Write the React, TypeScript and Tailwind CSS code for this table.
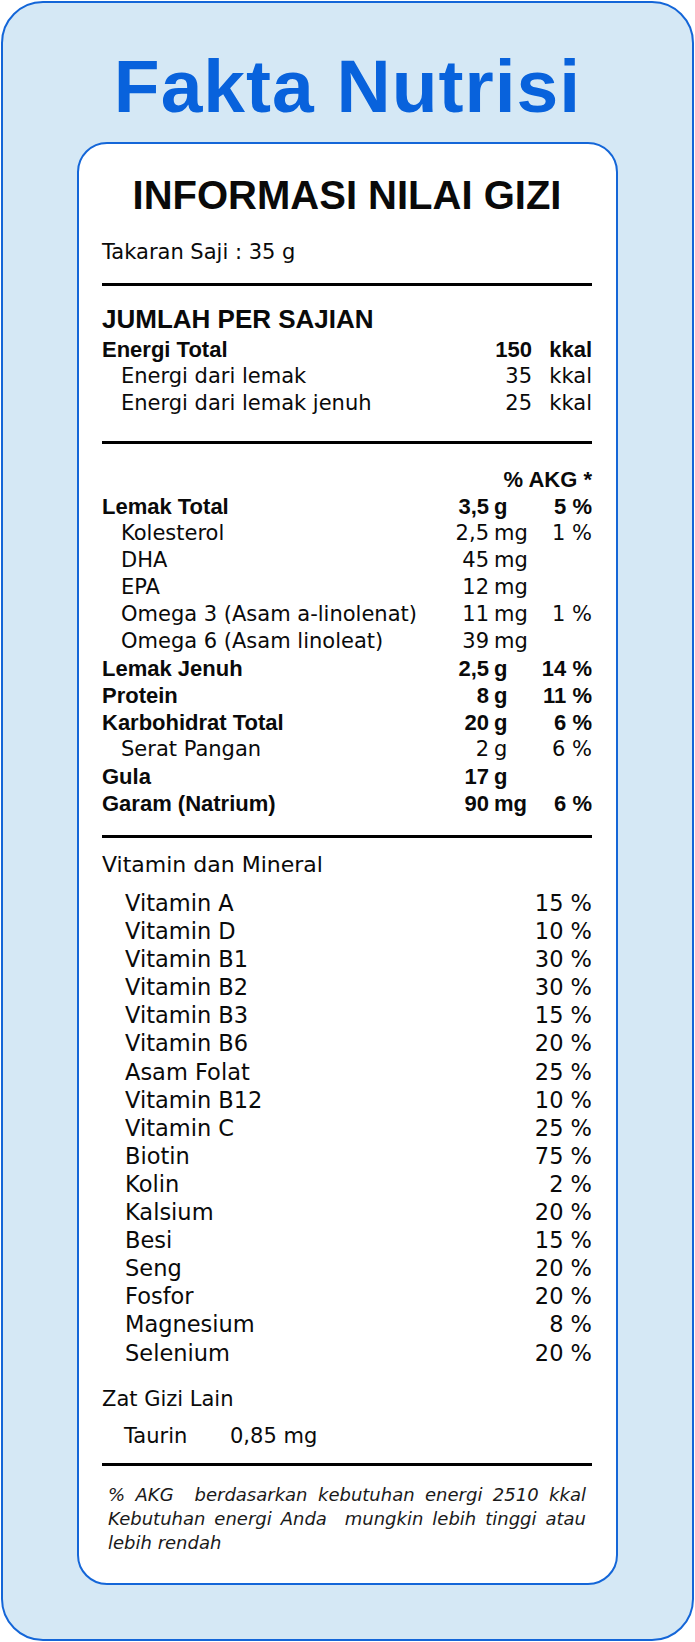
// Fakta Nutrisi label
const REG = "font-['DejaVu_Sans','Century_Gothic',sans-serif]"
const BOLD = "font-['Liberation_Sans',Arial,sans-serif] font-bold"

type Nutrient = {
  label: string
  num?: string
  unit?: string
  pct?: string
  bold?: boolean
}

const NUTRIENTS: Nutrient[] = [
  { label: 'Lemak Total', num: '3,5', unit: 'g', pct: '5 %', bold: true },
  { label: 'Kolesterol', num: '2,5', unit: 'mg', pct: '1 %' },
  { label: 'DHA', num: '45', unit: 'mg' },
  { label: 'EPA', num: '12', unit: 'mg' },
  { label: 'Omega 3 (Asam a-linolenat)', num: '11', unit: 'mg', pct: '1 %' },
  { label: 'Omega 6 (Asam linoleat)', num: '39', unit: 'mg' },
  { label: 'Lemak Jenuh', num: '2,5', unit: 'g', pct: '14 %', bold: true },
  { label: 'Protein', num: '8', unit: 'g', pct: '11 %', bold: true },
  { label: 'Karbohidrat Total', num: '20', unit: 'g', pct: '6 %', bold: true },
  { label: 'Serat Pangan', num: '2', unit: 'g', pct: '6 %' },
  { label: 'Gula', num: '17', unit: 'g', bold: true },
  { label: 'Garam (Natrium)', num: '90', unit: 'mg', pct: '6 %', bold: true },
]

const VITAMINS: [string, string][] = [
  ['Vitamin A', '15 %'],
  ['Vitamin D', '10 %'],
  ['Vitamin B1', '30 %'],
  ['Vitamin B2', '30 %'],
  ['Vitamin B3', '15 %'],
  ['Vitamin B6', '20 %'],
  ['Asam Folat', '25 %'],
  ['Vitamin B12', '10 %'],
  ['Vitamin C', '25 %'],
  ['Biotin', '75 %'],
  ['Kolin', '2 %'],
  ['Kalsium', '20 %'],
  ['Besi', '15 %'],
  ['Seng', '20 %'],
  ['Fosfor', '20 %'],
  ['Magnesium', '8 %'],
  ['Selenium', '20 %'],
]

function Rule({ className = '' }: { className?: string }) {
  return <div className={`h-[3px] bg-black ${className}`} />
}

function NutrientRow({ n }: { n: Nutrient }) {
  const font = n.bold ? `${BOLD} text-[22px]` : `${REG} text-[21px]`
  return (
    <div className={`flex items-baseline h-[27px] leading-[27px] whitespace-nowrap ${font}`}>
      <span className={`flex-1 ${n.bold ? '' : 'pl-[19px]'}`}>{n.label}</span>
      <span className="w-[60px] text-right">{n.num}</span>
      <span className="w-[36px] ml-[5px]">{n.unit}</span>
      <span className="w-[62px] text-right">{n.pct}</span>
    </div>
  )
}

function EnergyRow({ label, num, bold }: { label: string; num: string; bold?: boolean }) {
  const font = bold ? `${BOLD} text-[22px]` : `${REG} text-[21px]`
  return (
    <div className={`flex items-baseline h-[27px] leading-[27px] whitespace-nowrap ${font}`}>
      <span className={`flex-1 ${bold ? '' : 'pl-[19px]'}`}>{label}</span>
      <span className="w-[60px] text-right">{num}</span>
      <span className="w-[60px] text-right">kkal</span>
    </div>
  )
}

export default function App() {
  return (
    <div className="w-[695px] h-[1642px] bg-white p-[1px]">
      <div className="w-[693px] h-[1640px] rounded-[42px] border-2 border-[#1466d8] bg-[#d5e8f5] pt-[46px]">
        <h1 className={`text-center text-[75px] leading-[75px] tracking-[1px] text-[#0862dc] ${BOLD}`}>
          Fakta Nutrisi
        </h1>

        <div className="mt-[18px] ml-[74px] w-[541px] h-[1443px] rounded-[30px] border-2 border-[#1466d8] bg-white pt-[31px] pl-[23px] pr-[24px] text-[#0a0a0a]">
          <h2 className={`text-center text-[40px] leading-[40px] ${BOLD}`}>INFORMASI NILAI GIZI</h2>

          <p className={`mt-[24px] text-[21px] leading-[27px] ${REG}`}>Takaran Saji : 35 g</p>
          <Rule className="mt-[17px]" />

          {/* Jumlah per sajian */}
          <h3 className={`mt-[18px] text-[26px] leading-[30px] ${BOLD}`}>JUMLAH PER SAJIAN</h3>
          <div className="mt-[2px]">
            <EnergyRow label="Energi Total" num="150" bold />
            <EnergyRow label="Energi dari lemak" num="35" />
            <EnergyRow label="Energi dari lemak jenuh" num="25" />
          </div>
          <Rule className="mt-[24px]" />

          {/* Tabel gizi */}
          <div className={`mt-[22px] h-[27px] leading-[27px] text-right text-[22px] ${BOLD}`}>% AKG *</div>
          <div>
            {NUTRIENTS.map((n) => (
              <NutrientRow key={n.label} n={n} />
            ))}
          </div>
          <Rule className="mt-[18px]" />

          {/* Vitamin */}
          <p className={`mt-[13px] text-[22px] leading-[28px] ${REG}`}>Vitamin dan Mineral</p>
          <div className="mt-[10px]">
            {VITAMINS.map(([name, pct]) => (
              <div key={name} className={`flex h-[28.1px] leading-[28px] text-[22.5px] ${REG}`}>
                <span className="flex-1 pl-[23px]">{name}</span>
                <span>{pct}</span>
              </div>
            ))}
          </div>

          <p className={`mt-[19px] text-[21px] leading-[27px] ${REG}`}>Zat Gizi Lain</p>
          <div className={`mt-[10px] flex text-[21px] leading-[27px] ${REG}`}>
            <span className="w-[128px] pl-[22px]">Taurin</span>
            <span>0,85 mg</span>
          </div>
          <Rule className="mt-[13px]" />

          {/* Catatan */}
          <div className={`mt-[17px] px-[6px] italic text-[18px] leading-[24px] text-[#1a1a1a] ${REG}`}>
            <p className="text-justify [text-align-last:justify] whitespace-pre">% AKG  berdasarkan kebutuhan energi 2510 kkal</p>
            <p className="text-justify [text-align-last:justify] whitespace-pre">Kebutuhan energi Anda  mungkin lebih tinggi atau</p>
            <p>lebih rendah</p>
          </div>
        </div>
      </div>
    </div>
  )
}
